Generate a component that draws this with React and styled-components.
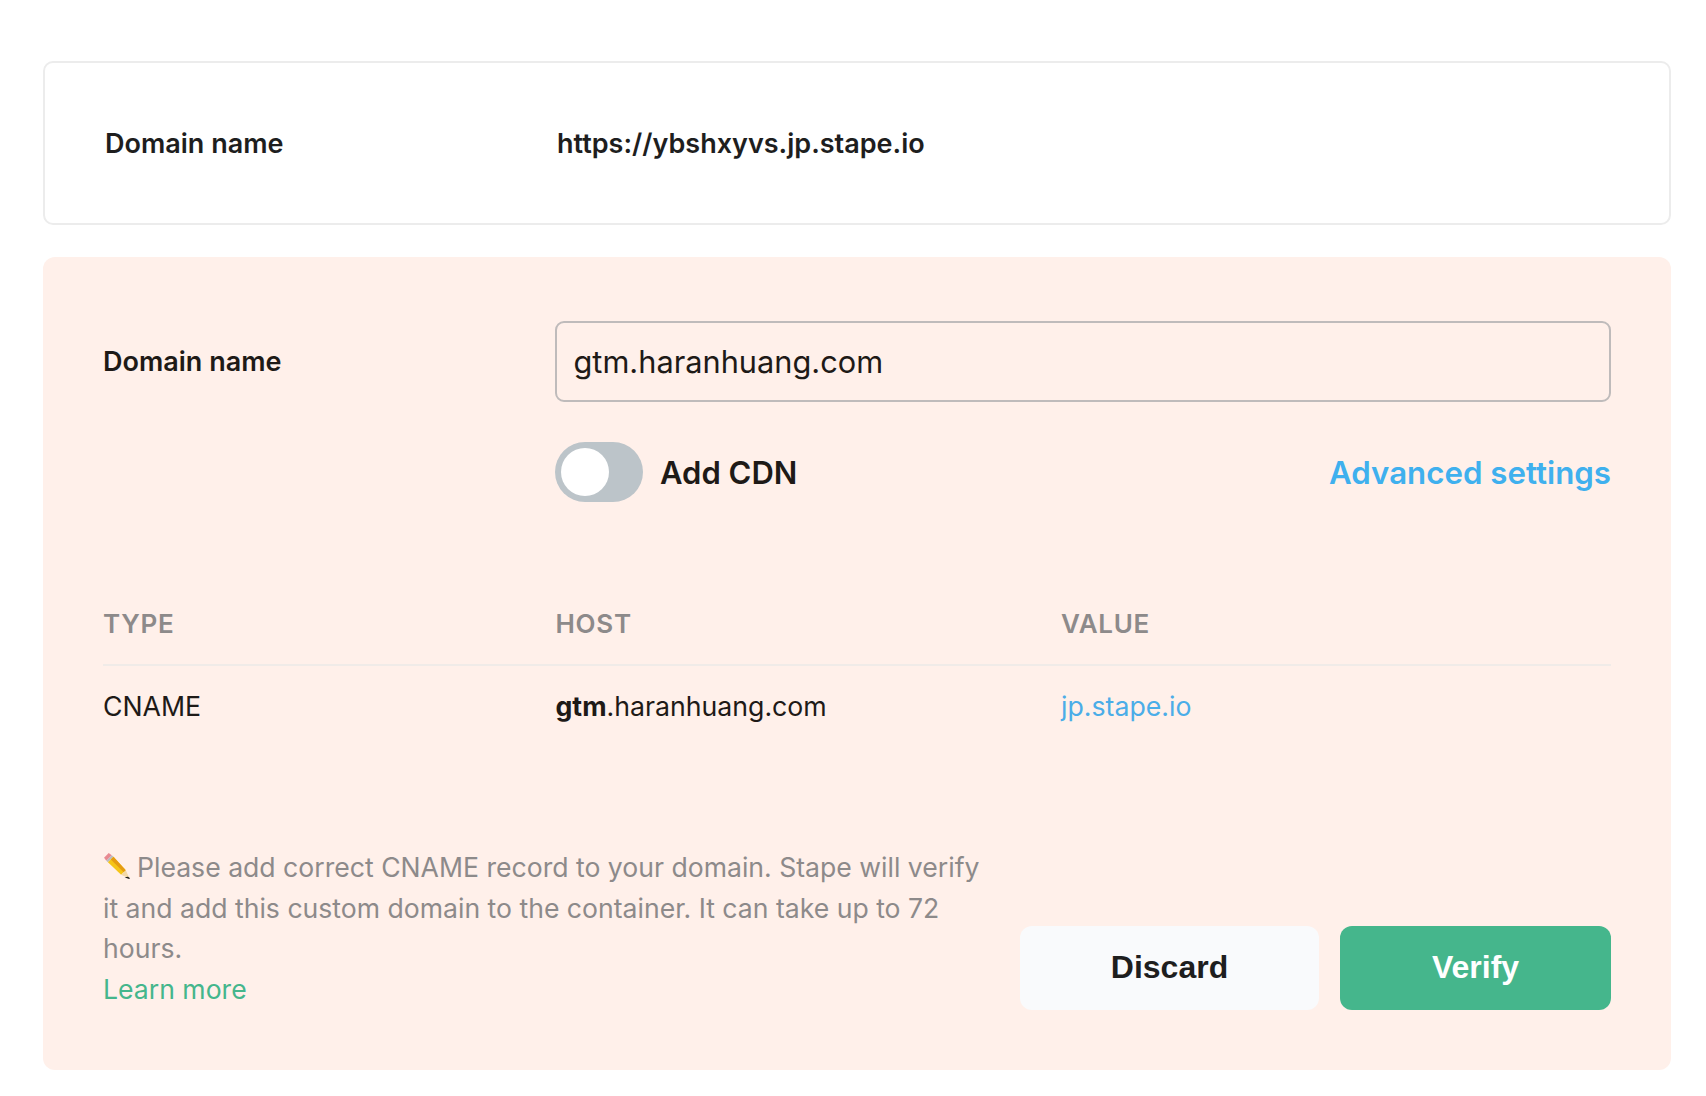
import React from "react";
import styled, { createGlobalStyle } from "styled-components";

const Global = createGlobalStyle`
  html, body { margin: 0; padding: 0; background: #fff; }
  body { font-family: Inter, "Liberation Sans", sans-serif; color: #1e1a17; }
  * { box-sizing: border-box; }
`;

const Page = styled.main`
  width: 1706px;
  height: 1096px;
  padding: 61px 35px 0 43px;
  display: flex;
  flex-direction: column;
  gap: 32px;
`;

const SummaryCard = styled.section`
  height: 164px;
  border: 2px solid #ececec;
  border-radius: 10px;
  background: #fff;
  padding-left: 60px;
  display: grid;
  grid-template-columns: 452px 1fr;
  align-items: center;
`;

const SummaryText = styled.span`
  font-size: 27px;
  font-weight: 600;
  color: #1e1e1e;
`;

const Panel = styled.section`
  height: 813px;
  border-radius: 12px;
  background: #fff0ea;
  padding: 64px 60px 0;
  display: flex;
  flex-direction: column;
`;

const FieldRow = styled.div`
  display: grid;
  grid-template-columns: 452px 1fr;
  align-items: center;
`;

const FieldLabel = styled.label`
  font-size: 27px;
  font-weight: 600;
  color: #1e1a17;
  margin-bottom: 1px;
`;

const DomainInput = styled.div`
  height: 81px;
  border: 2px solid #bfbbbb;
  border-radius: 9px;
  padding-left: 16.5px;
  display: flex;
  align-items: center;
  font-size: 30.75px;
  color: #1e1a17;
`;

const OptionsRow = styled.div`
  margin: 40px 0 0 452px;
  height: 60px;
  display: flex;
  align-items: center;
  justify-content: space-between;
`;

const ToggleGroup = styled.div`
  display: flex;
  align-items: center;
  gap: 17px;
`;

const Track = styled.span`
  width: 88px;
  height: 60px;
  border-radius: 30px;
  background: #bcc4c9;
  padding: 6px;
  display: flex;
`;

const Knob = styled.span`
  width: 48px;
  height: 48px;
  border-radius: 50%;
  background: #fff;
`;

const ToggleLabel = styled.span`
  font-size: 31px;
  font-weight: 600;
  color: #1e1a17;
`;

const AdvancedLink = styled.a`
  font-size: 31.25px;
  font-weight: 600;
  color: #3fb0ee;
  position: relative;
  top: 1px;
`;

const RecordHead = styled.div`
  margin-top: 106px;
  height: 58px;
  border-bottom: 2px solid #f0ebe8;
  display: grid;
  grid-template-columns: 452.5px 505.5px 1fr;
  align-items: start;
  font-size: 26px;
  font-weight: 600;
  letter-spacing: 0.7px;
  color: #8d8a8a;
  text-transform: uppercase;
`;

const RecordRow = styled.div`
  height: 80px;
  display: grid;
  grid-template-columns: 452.5px 505.5px 1fr;
  align-items: center;
  font-size: 26.7px;
  color: #1e1a17;
`;

const HostStrong = styled.strong`
  font-weight: 700;
`;

const ValueLink = styled.a`
  color: #4bade8;
`;

const Footer = styled.div`
  margin-top: 101px;
  display: flex;
  justify-content: space-between;
  align-items: flex-end;
`;

const Note = styled.p`
  margin: 0;
  width: 880px;
  font-size: 26.6px;
  line-height: 40.7px;
  color: #8d8a8a;
`;

const PencilIcon = styled.svg`
  width: 28px;
  height: 28px;
  margin-right: 6px;
  vertical-align: -3px;
`;

const LearnMore = styled.a`
  display: block;
  color: #45b68c;
`;

const Actions = styled.div`
  display: flex;
  gap: 21px;
`;

const ActionButton = styled.button`
  height: 84px;
  width: ${(p) => p.$width}px;
  border: 0;
  border-radius: 12px;
  background: ${(p) => (p.$primary ? "#45b68c" : "#f9fafc")};
  color: ${(p) => (p.$primary ? "#fff" : "#1e1e1e")};
  font-family: "Liberation Sans", Arial, sans-serif;
  font-size: 32px;
  font-weight: 700;
`;

const Pencil = () => (
  <PencilIcon viewBox="0 0 27 27" aria-hidden="true">
    <path d="M1 5.5 5.5 1l3 2.2-5.3 5.3z" fill="#e88a92" />
    <path d="M3.2 8.5 8.5 3.2l1.6 1.4-5.4 5.4z" fill="#b9bdc2" />
    <path d="M4.7 10 10.1 4.6 22 17.5 17.5 22z" fill="#f5c518" />
    <path d="M7.5 7.2 10.1 4.6 22 17.5l-2 2z" fill="#e59c12" />
    <path d="M17.5 22 22 17.5l3.6 8.1z" fill="#f3d9a8" />
    <path d="m23.7 24.3 1.9 1.3-3-1z" fill="#222" stroke="#222" />
  </PencilIcon>
);

export default function App() {
  return (
    <Page>
      <Global />
      <SummaryCard>
        <SummaryText>Domain name</SummaryText>
        <SummaryText>https://ybshxyvs.jp.stape.io</SummaryText>
      </SummaryCard>
      <Panel>
        <FieldRow>
          <FieldLabel>Domain name</FieldLabel>
          <DomainInput>gtm.haranhuang.com</DomainInput>
        </FieldRow>
        <OptionsRow>
          <ToggleGroup>
            <Track>
              <Knob />
            </Track>
            <ToggleLabel>Add CDN</ToggleLabel>
          </ToggleGroup>
          <AdvancedLink>Advanced settings</AdvancedLink>
        </OptionsRow>
        <RecordHead>
          <span>Type</span>
          <span>Host</span>
          <span>Value</span>
        </RecordHead>
        <RecordRow>
          <span>CNAME</span>
          <span>
            <HostStrong>gtm</HostStrong>.haranhuang.com
          </span>
          <ValueLink>jp.stape.io</ValueLink>
        </RecordRow>
        <Footer>
          <Note>
            <Pencil />
            Please add correct CNAME record to your domain. Stape will verify it and add this custom domain to the container. It can take up to 72 hours.
            <LearnMore>Learn more</LearnMore>
          </Note>
          <Actions>
            <ActionButton $width={299}>Discard</ActionButton>
            <ActionButton $primary $width={271}>Verify</ActionButton>
          </Actions>
        </Footer>
      </Panel>
    </Page>
  );
}
